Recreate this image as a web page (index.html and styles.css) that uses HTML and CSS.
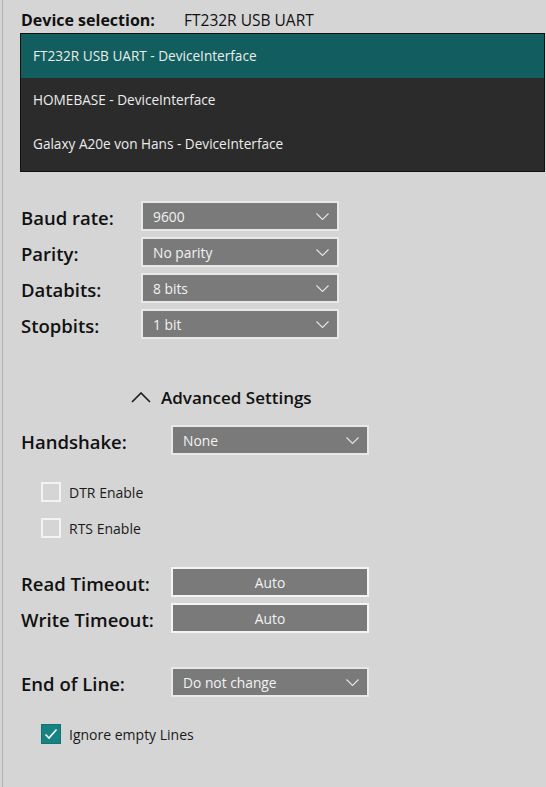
FILE: index.html
```html
<!DOCTYPE html>
<html>
<head>
<meta charset="utf-8">
<link rel="stylesheet" href="styles.css">
</head>
<body>
<div class="panel">
  <div class="device-header">
    <span class="device-label">Device selection:</span>
    <span class="device-value">FT232R USB UART</span>
  </div>
  <div class="device-list">
    <div class="device-item selected">FT232R USB UART - DeviceInterface</div>
    <div class="device-item">HOMEBASE - DeviceInterface</div>
    <div class="device-item">Galaxy A20e von Hans - DeviceInterface</div>
  </div>

  <div class="basic">
    <div class="row">
      <span class="label w121">Baud rate:</span>
      <div class="combo"><span>9600</span><svg class="chev" width="13" height="7" viewBox="0 0 13 7"><path d="M0.5 0.5 L6.5 6.5 L12.5 0.5" /></svg></div>
    </div>
    <div class="row">
      <span class="label w121">Parity:</span>
      <div class="combo"><span>No parity</span><svg class="chev" width="13" height="7" viewBox="0 0 13 7"><path d="M0.5 0.5 L6.5 6.5 L12.5 0.5" /></svg></div>
    </div>
    <div class="row">
      <span class="label w121">Databits:</span>
      <div class="combo"><span>8 bits</span><svg class="chev" width="13" height="7" viewBox="0 0 13 7"><path d="M0.5 0.5 L6.5 6.5 L12.5 0.5" /></svg></div>
    </div>
    <div class="row">
      <span class="label w121">Stopbits:</span>
      <div class="combo"><span>1 bit</span><svg class="chev" width="13" height="7" viewBox="0 0 13 7"><path d="M0.5 0.5 L6.5 6.5 L12.5 0.5" /></svg></div>
    </div>
  </div>

  <div class="advanced-toggle">
    <svg class="up" width="20" height="11" viewBox="0 0 20 11"><path d="M1 10 L10 1 L19 10" /></svg>
    <span>Advanced Settings</span>
  </div>

  <div class="row handshake">
    <span class="label w151">Handshake:</span>
    <div class="combo"><span>None</span><svg class="chev" width="13" height="7" viewBox="0 0 13 7"><path d="M0.5 0.5 L6.5 6.5 L12.5 0.5" /></svg></div>
  </div>

  <div class="checks">
    <label class="check"><span class="box"></span><span>DTR Enable</span></label>
    <label class="check"><span class="box"></span><span>RTS Enable</span></label>
  </div>

  <div class="timeouts">
    <div class="row">
      <span class="label w151">Read Timeout:</span>
      <div class="field">Auto</div>
    </div>
    <div class="row">
      <span class="label w151">Write Timeout:</span>
      <div class="field">Auto</div>
    </div>
  </div>

  <div class="row eol">
    <span class="label w151">End of Line:</span>
    <div class="combo"><span>Do not change</span><svg class="chev" width="13" height="7" viewBox="0 0 13 7"><path d="M0.5 0.5 L6.5 6.5 L12.5 0.5" /></svg></div>
  </div>

  <div class="checks last">
    <label class="check"><span class="box checked"><svg width="16" height="16" viewBox="0 0 16 16"><path d="M2.5 8.5 L6 12 L13.5 3.5" /></svg></span><span>Ignore empty Lines</span></label>
  </div>
</div>
</body>
</html>
```

FILE: styles.css
```css
html, body {
  margin: 0;
  padding: 0;
  background: #d5d5d5;
}
body {
  font-family: "Open Sans", "Noto Sans", sans-serif;
  color: #111;
}
.panel {
  margin-left: 2px;
  border-left: 1px solid #b3b3b3;
  min-height: 787px;
  padding-left: 17px;
  box-sizing: border-box;
}
.device-header {
  height: 33px;
  box-sizing: border-box;
  padding-top: 9px;
  display: flex;
  line-height: 22px;
  font-size: 15.5px;
}
.device-label {
  width: 163px;
  padding-left: 1px;
  font-weight: 700;
  font-size: 16px;
}
.device-value {
  font-weight: 400;
}
.device-list {
  width: 525px;
  height: 139px;
  box-sizing: border-box;
  border: 1px solid #111;
  background: #2b2b2b;
}
.device-item {
  height: 44px;
  line-height: 44px;
  padding-left: 12px;
  color: #ececec;
  font-size: 13.6px;
}
.device-item.selected {
  background: #125e5f;
}
.basic {
  margin-top: 29px;
  display: flex;
  flex-direction: column;
  gap: 6px;
}
.row {
  display: flex;
  align-items: center;
  height: 30px;
}
.label {
  font-size: 18.5px;
  font-weight: 600;
  padding-left: 1px;
  box-sizing: border-box;
  position: relative;
  top: 1px;
}
.w121 { width: 121px; }
.w151 { width: 151px; }
.combo {
  width: 198px;
  height: 30px;
  box-sizing: border-box;
  border: 2px solid #e8e8e8;
  background: #7a7a7a;
  display: flex;
  align-items: center;
  justify-content: space-between;
  padding: 0 8px 0 10px;
  color: #f2f2f2;
  font-size: 13.8px;
}
.chev path {
  fill: none;
  stroke: #e6e6e6;
  stroke-width: 1.1;
}
.advanced-toggle {
  margin-top: 43px;
  height: 30px;
  display: flex;
  align-items: center;
  padding-left: 111px;
  gap: 10px;
  font-size: 17px;
  font-weight: 600;
}
.up path {
  fill: none;
  stroke: #1a1a1a;
  stroke-width: 1.6;
}
.handshake {
  margin-top: 13px;
}
.checks {
  margin-top: 27px;
  display: flex;
  flex-direction: column;
  gap: 16px;
  padding-left: 21px;
}
.check {
  display: flex;
  align-items: center;
  height: 20px;
  gap: 8px;
  font-size: 14px;
  color: #1a1a1a;
}
.box {
  width: 20px;
  height: 20px;
  box-sizing: border-box;
  border: 2px solid #f3f3f3;
  display: flex;
  align-items: center;
  justify-content: center;
}
.box.checked {
  background: #168282;
  border: 1px solid #137373;
}
.box.checked path {
  fill: none;
  stroke: #ffffff;
  stroke-width: 1.6;
}
.timeouts {
  margin-top: 29px;
  display: flex;
  flex-direction: column;
  gap: 6px;
}
.field {
  width: 198px;
  height: 30px;
  box-sizing: border-box;
  border: 2px solid #f4f4f4;
  background: #7a7a7a;
  color: #f2f2f2;
  font-size: 13.8px;
  display: flex;
  align-items: center;
  justify-content: center;
}
.eol {
  margin-top: 34px;
}
.checks.last {
  margin-top: 27px;
}
```
